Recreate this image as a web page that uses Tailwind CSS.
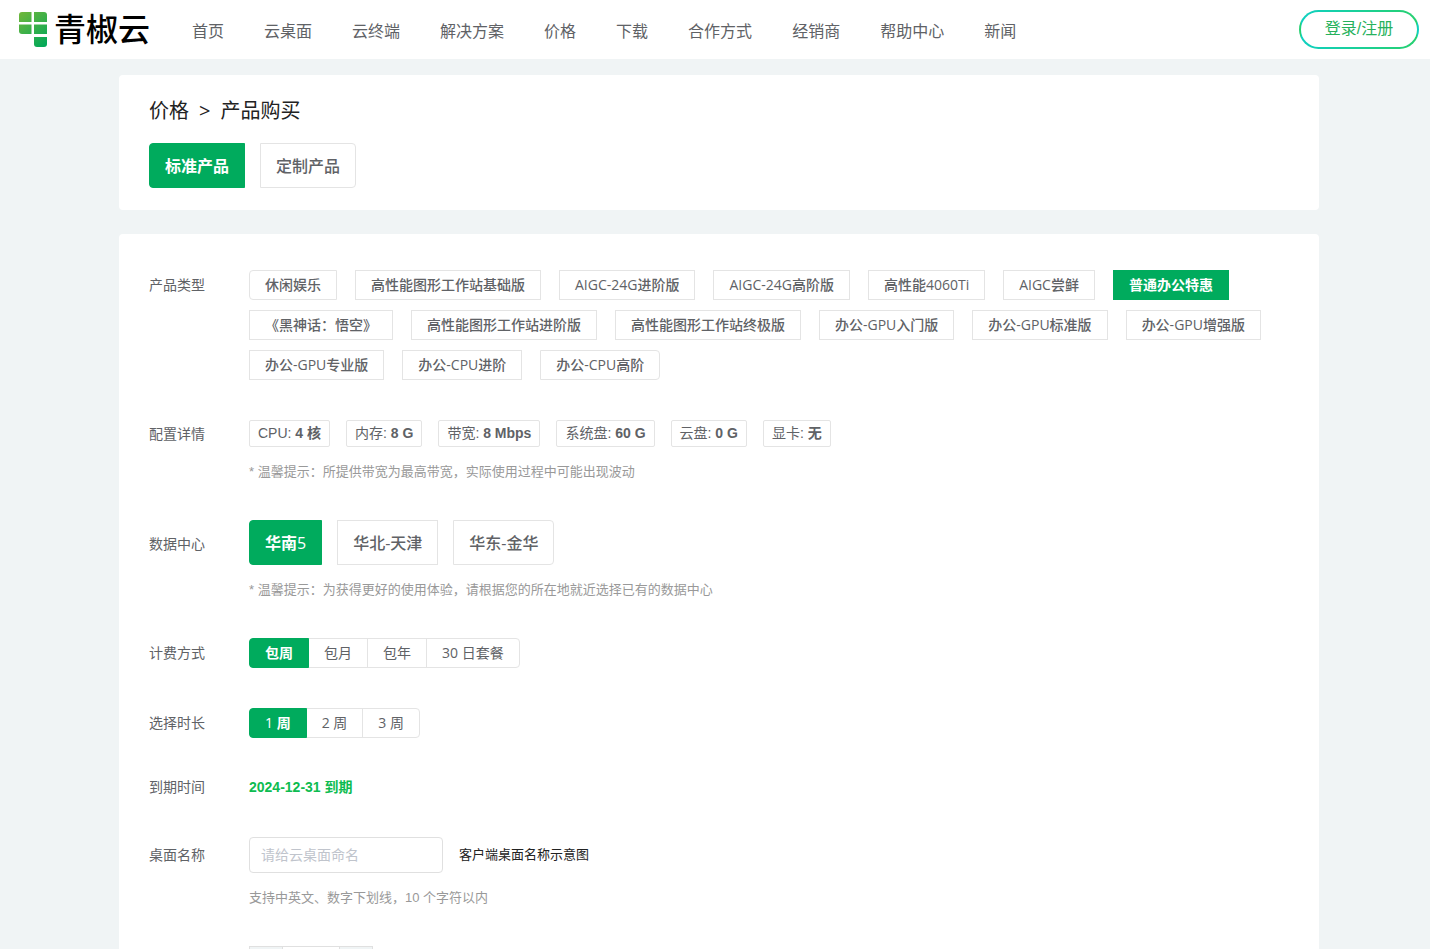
<!DOCTYPE html>
<html lang="zh-CN">
<head>
<meta charset="utf-8">
<meta name="viewport" content="width=device-width, initial-scale=1">
<title>青椒云 - 产品购买</title>
<script src="https://cdn.jsdelivr.net/npm/@tailwindcss/browser@4"></script>
</head>
<body class="flex h-screen flex-col overflow-hidden bg-[#f0f4f5] font-['Liberation_Sans','Noto_Sans_CJK_SC',sans-serif] text-sm text-[#606266]">
<header class="flex shrink-0 items-center bg-white py-2.5 pr-[11px] pl-[18px]">
  <a href="#" class="flex items-center gap-1.5" aria-label="青椒云">
    <svg class="h-9 w-[30px]" viewBox="0 0 30 36" aria-hidden="true">
      <defs><linearGradient id="leaf" gradientUnits="userSpaceOnUse" x1="2" y1="2" x2="28" y2="34"><stop offset="0" stop-color="#6cb63c"/><stop offset="1" stop-color="#00a859"/></linearGradient></defs>
      <g fill="url(#leaf)">
        <path d="M4 0h9.500v10H1V3a3 3 0 0 1 3-3z"/>
        <path d="M16 0h10a3 3 0 0 1 3 3v7H16z"/>
        <path d="M1 12.500h12.500V22H4a3 3 0 0 1-3-3z"/>
        <path d="M16 12.500h13V22H16z"/>
        <path d="M16 25h13v7a3 3 0 0 1-3 3h-7a3 3 0 0 1-3-3z"/>
      </g>
    </svg>
    <span class="text-[32px] leading-9 font-medium text-black">青椒云</span>
  </a>
  <nav class="ml-[42px] flex gap-10 pt-1 text-base leading-6 whitespace-nowrap">
    <a href="#">首页</a><a href="#">云桌面</a><a href="#">云终端</a><a href="#">解决方案</a><a href="#">价格</a><a href="#">下载</a><a href="#">合作方式</a><a href="#">经销商</a><a href="#">帮助中心</a><a href="#">新闻</a>
  </nav>
  <button type="button" class="ml-auto h-[39px] w-[120px] rounded-full border-2 border-transparent bg-[linear-gradient(#fff,#fff),linear-gradient(90deg,#0fd0c0,#26d070)] pb-0.5 text-base text-[#27b15c] [background-clip:padding-box,border-box]">登录/注册</button>
</header>

<main class="mt-4 ml-2 w-full max-w-[1200px] self-center">
  <section class="rounded-sm bg-white px-[30px] pt-5 pb-[22px]">
    <h1 class="flex gap-2.5 text-xl leading-8 text-[#222]"><a href="#">价格</a><span class="font-['Open_Sans',sans-serif] font-medium">&gt;</span><span>产品购买</span></h1>
    <div class="mt-4 flex gap-[15px] font-['Open_Sans','Noto_Sans_CJK_SC',sans-serif] text-base">
      <button type="button" class="h-[45px] rounded-l border border-[#00ab5d] bg-[#00ab5d] px-[15px] font-bold text-white">标准产品</button>
      <button type="button" class="h-[45px] rounded-r border border-[#e4e4e4] px-[15px] font-medium">定制产品</button>
    </div>
  </section>

  <section class="mt-6 flex flex-col gap-10 rounded-sm bg-white px-[30px] py-9">
    <div class="flex">
      <div class="w-[100px] shrink-0 leading-[30px]">产品类型</div>
      <div class="flex flex-wrap gap-x-[18px] gap-y-2.5 font-['Open_Sans','Noto_Sans_CJK_SC',sans-serif]">
        <button type="button" class="h-[30px] rounded-l border border-[#e4e4e4] px-[15px] font-medium">休闲娱乐</button>
        <button type="button" class="h-[30px] border border-[#e4e4e4] px-[15px] font-medium">高性能图形工作站基础版</button>
        <button type="button" class="h-[30px] border border-[#e4e4e4] px-[15px] font-medium">AIGC-24G进阶版</button>
        <button type="button" class="h-[30px] border border-[#e4e4e4] px-[15px] font-medium">AIGC-24G高阶版</button>
        <button type="button" class="h-[30px] border border-[#e4e4e4] px-[15px] font-medium">高性能4060Ti</button>
        <button type="button" class="h-[30px] border border-[#e4e4e4] px-[15px] font-medium">AIGC尝鲜</button>
        <button type="button" class="h-[30px] border border-[#00ab5d] bg-[#00ab5d] px-[15px] font-bold text-white">普通办公特惠</button>
        <button type="button" class="h-[30px] border border-[#e4e4e4] px-[15px] font-medium">《黑神话：悟空》</button>
        <button type="button" class="h-[30px] border border-[#e4e4e4] px-[15px] font-medium">高性能图形工作站进阶版</button>
        <button type="button" class="h-[30px] border border-[#e4e4e4] px-[15px] font-medium">高性能图形工作站终极版</button>
        <button type="button" class="h-[30px] border border-[#e4e4e4] px-[15px] font-medium">办公-GPU入门版</button>
        <button type="button" class="h-[30px] border border-[#e4e4e4] px-[15px] font-medium">办公-GPU标准版</button>
        <button type="button" class="h-[30px] border border-[#e4e4e4] px-[15px] font-medium">办公-GPU增强版</button>
        <button type="button" class="h-[30px] border border-[#e4e4e4] px-[15px] font-medium">办公-GPU专业版</button>
        <button type="button" class="h-[30px] border border-[#e4e4e4] px-[15px] font-medium">办公-CPU进阶</button>
        <button type="button" class="h-[30px] rounded-r border border-[#e4e4e4] px-[15px] font-medium">办公-CPU高阶</button>
      </div>
    </div>

    <div class="flex">
      <div class="w-[100px] shrink-0 leading-[29px]">配置详情</div>
      <div>
        <ul class="flex gap-4 leading-[25px]">
          <li class="rounded-xs border border-[#e4e4e4] px-2">CPU: <b>4 核</b></li>
          <li class="rounded-xs border border-[#e4e4e4] px-2">内存: <b>8 G</b></li>
          <li class="rounded-xs border border-[#e4e4e4] px-2">带宽: <b>8 Mbps</b></li>
          <li class="rounded-xs border border-[#e4e4e4] px-2">系统盘: <b>60 G</b></li>
          <li class="rounded-xs border border-[#e4e4e4] px-2">云盘: <b>0 G</b></li>
          <li class="rounded-xs border border-[#e4e4e4] px-2">显卡: <b>无</b></li>
        </ul>
        <p class="mt-4 text-[13px] leading-[17px] text-[#999]">* 温馨提示：所提供带宽为最高带宽，实际使用过程中可能出现波动</p>
      </div>
    </div>

    <div class="flex">
      <div class="w-[100px] shrink-0 leading-[49px]">数据中心</div>
      <div>
        <div class="flex gap-[15px] font-['Open_Sans','Noto_Sans_CJK_SC',sans-serif] text-base">
          <button type="button" class="h-[45px] rounded-l border border-[#00ab5d] bg-[#00ab5d] px-[15px] font-bold text-white">华南<span class="font-medium">5</span></button>
          <button type="button" class="h-[45px] border border-[#e4e4e4] px-[15px] font-medium">华北-天津</button>
          <button type="button" class="h-[45px] rounded-r border border-[#e4e4e4] px-[15px] font-medium">华东-金华</button>
        </div>
        <p class="mt-4 text-[13px] leading-[17px] text-[#999]">* 温馨提示：为获得更好的使用体验，请根据您的所在地就近选择已有的数据中心</p>
      </div>
    </div>

    <div class="flex">
      <div class="w-[100px] shrink-0 leading-[30px]">计费方式</div>
      <div class="flex font-['Open_Sans','Noto_Sans_CJK_SC',sans-serif]">
        <button type="button" class="z-10 h-[30px] rounded-l border border-[#00ab5d] bg-[#00ab5d] px-[15px] font-bold text-white">包周</button>
        <button type="button" class="-ml-px h-[30px] border border-[#e4e4e4] px-[15px]">包月</button>
        <button type="button" class="-ml-px h-[30px] border border-[#e4e4e4] px-[15px]">包年</button>
        <button type="button" class="-ml-px h-[30px] rounded-r border border-[#e4e4e4] px-[15px]">30 日套餐</button>
      </div>
    </div>

    <div class="flex">
      <div class="w-[100px] shrink-0 leading-[30px]">选择时长</div>
      <div class="flex font-['Open_Sans','Noto_Sans_CJK_SC',sans-serif]">
        <button type="button" class="z-10 h-[30px] rounded-l border border-[#00ab5d] bg-[#00ab5d] px-[15px] font-bold text-white"><span class="font-medium">1</span> 周</button>
        <button type="button" class="-ml-px h-[30px] border border-[#e4e4e4] px-[15px]">2 周</button>
        <button type="button" class="-ml-px h-[30px] rounded-r border border-[#e4e4e4] px-[15px]">3 周</button>
      </div>
    </div>

    <div class="flex leading-[19px]">
      <div class="w-[100px] shrink-0">到期时间</div>
      <b class="text-[#0dbc50]">2024-12-31 到期</b>
    </div>

    <div class="flex">
      <label for="desktop-name" class="w-[100px] shrink-0 leading-9">桌面名称</label>
      <div>
        <div class="flex items-center gap-4">
          <input id="desktop-name" type="text" placeholder="请给云桌面命名" class="h-9 w-[194px] rounded border border-[#e0e0e0] px-[11px] pb-0.5 font-['Open_Sans','Noto_Sans_CJK_SC',sans-serif] placeholder:text-[#c0c4cc]">
          <a href="#" class="text-[13px] text-[#222]">客户端桌面名称示意图</a>
        </div>
        <p class="mt-4 text-[13px] leading-[17px] text-[#999]">支持中英文、数字下划线，10 个字符以内</p>
      </div>
    </div>

    <div class="flex">
      <label for="quantity" class="w-[100px] shrink-0 leading-9">购买数量</label>
      <div class="flex h-9 w-[124px] border border-[#e0e0e0] bg-[#f0f4f5]">
        <button type="button" class="w-8 shrink-0" aria-label="减少">−</button>
        <input id="quantity" type="text" value="1" class="w-full min-w-0 border-x border-[#e0e0e0] bg-white text-center">
        <button type="button" class="w-8 shrink-0" aria-label="增加">+</button>
      </div>
    </div>
  </section>
</main>
</body>
</html>
